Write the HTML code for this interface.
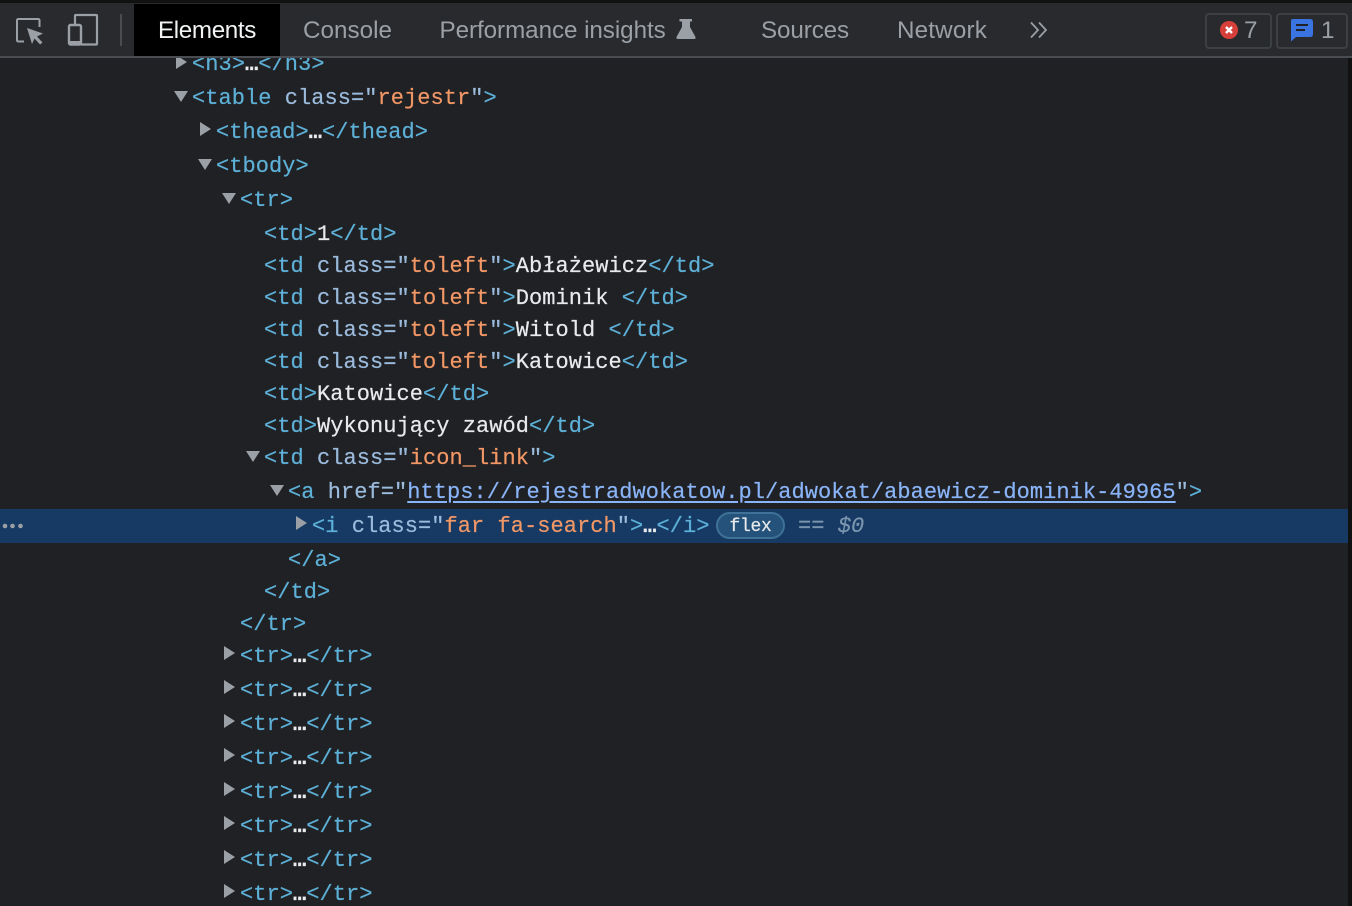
<!DOCTYPE html>
<html><head><meta charset="utf-8">
<style>
html,body{margin:0;padding:0;width:1352px;height:906px;overflow:hidden;background:#202124}
*{box-sizing:border-box}
#bar{position:absolute;left:0;top:3px;width:1352px;height:54px;background:#292a2d}
#top{position:absolute;left:0;top:0;width:1352px;height:3px;background:#111}
#line{position:absolute;left:0;top:56px;width:1352px;height:2px;background:#494c50}
#sel{position:absolute;left:134px;top:4px;width:146px;height:52px;background:#000}
.tab{position:absolute;top:31px;transform:translateY(-50%);font:24.2px/30px "Liberation Sans",sans-serif;color:#9aa0a6;white-space:nowrap}
.badge{position:absolute;top:13px;height:36px;border:2px solid #3c4043;border-radius:4px}
.l{position:absolute;font:22px/30px "Liberation Mono",monospace;letter-spacing:.046px;white-space:pre;color:#e8eaed;height:30px;-webkit-text-stroke:.2px}
.t{color:#5db0d7}.n{color:#9bbbdc}.v{color:#f29766}.w{color:#e8eaed}.e{color:#e8eaed;font-weight:bold}
.u{color:#8ab4f8;text-decoration:underline;text-underline-offset:3px}
.r,.d{position:absolute;width:0;height:0}
.r{border-left:11px solid #9aa0a6;border-top:7.5px solid transparent;border-bottom:7.5px solid transparent}
.d{border-top:11px solid #9aa0a6;border-left:7.5px solid transparent;border-right:7.5px solid transparent}
#hl{position:absolute;left:0;top:509px;width:1348px;height:34px;background:#163a63}
#sb{position:absolute;left:1348px;top:58px;width:4px;height:848px;background:#111}
#pill{position:absolute;left:716px;top:512px;width:69px;height:27px;border:2px solid #3f7296;border-radius:14px;background:#25527a;color:#e8eaed;font:18px/27px "Liberation Mono",monospace;letter-spacing:-.3px;text-align:center;-webkit-text-stroke:.2px}
</style></head><body>
<div id="top"></div><div id="bar"></div><div id="line"></div><div id="sel"></div>
<svg style="position:absolute;left:0;top:0" width="130" height="58" fill="none">
<path d="M24 41.500H18.500Q17 41.500 17 40V20.500Q17 19 18.500 19H38Q39.500 19 39.500 20.500V27" stroke="#9aa0a6" stroke-width="2"/>
<path d="M27 28L43 33.500L37 36.500L42.500 42.500L40 44.500L34.500 38.500L32 44Z" fill="#9aa0a6"/>
<path d="M75 24V16Q75 15 76 15H96Q97 15 97 16V43.500Q97 44.500 96 44.500H81" stroke="#9aa0a6" stroke-width="2.200"/>
<rect x="69" y="25" width="12" height="19.500" rx="1.500" stroke="#9aa0a6" stroke-width="2.400"/>
<rect x="69" y="41" width="12" height="4" fill="#9aa0a6"/>
<rect x="120" y="14" width="2" height="32" fill="#4a4c50"/>
</svg>
<div class="tab" style="left:158px;color:#f1f3f4;letter-spacing:-.35px">Elements</div>
<div class="tab" style="left:303px;letter-spacing:.03px">Console</div>
<div class="tab" style="left:439.500px;letter-spacing:-.05px">Performance insights</div>
<svg style="position:absolute;left:676px;top:18px" width="20" height="22"><path d="M3.500 1H16V3.500H14V9L19.500 19Q20 21 18 21H2Q0 21 .5 19L6 9V3.500H3.500Z" fill="#9aa0a6"/></svg>
<div class="tab" style="left:761px;letter-spacing:-.1px">Sources</div>
<div class="tab" style="left:897px;letter-spacing:.18px">Network</div>
<svg style="position:absolute;left:1030px;top:21px" width="18" height="18" fill="none" stroke="#9aa0a6" stroke-width="1.800"><path d="M1 1.500L8 9L1 16.500M9 1.500L16 9L9 16.500"/></svg>
<div class="badge" style="left:1205px;width:67px"></div>
<div class="badge" style="left:1276px;width:72px"></div>
<svg style="position:absolute;left:1220px;top:21px" width="19" height="19"><circle cx="9" cy="9" r="9" fill="#d7403a"/><path d="M6 6L12 12M12 6L6 12" stroke="#fff" stroke-width="2.400"/></svg>
<div class="tab" style="left:1244px">7</div>
<svg style="position:absolute;left:1290px;top:18px" width="24" height="24"><path d="M3 1H20Q23 1 23 4V16Q23 19 20 19H6L1 23.500V3Q1 1 3 1Z" fill="#3a74e0"/><path d="M6 7H18M6 12H15" stroke="#202124" stroke-width="2"/></svg>
<div class="tab" style="left:1321px">1</div>

<div id="hl"></div><div id="sb"></div>
<div style="position:absolute;left:0;top:58px;width:1348px;height:848px;overflow:hidden">
<div style="position:absolute;left:0;top:-58px;width:1348px;height:906px">
<div class="r" style="left:176px;top:55px;border-left-width:11px;border-top-width:7px;border-bottom-width:7px"></div>
<div class="l t" style="left:192px;top:50px">&lt;h3&gt;<span class="e">…</span>&lt;/h3&gt;</div>
<div class="d" style="left:174px;top:91px"></div>
<div class="l t" style="left:192px;top:84px">&lt;table <span class="n">class=</span><span class="n">"</span><span class="v">rejestr</span><span class="n">"</span>&gt;</div>
<div class="r" style="left:200px;top:122px"></div>
<div class="l t" style="left:216px;top:118px">&lt;thead&gt;<span class="e">…</span>&lt;/thead&gt;</div>
<div class="d" style="left:198px;top:159px"></div>
<div class="l t" style="left:216px;top:152px">&lt;tbody&gt;</div>
<div class="d" style="left:222px;top:193px"></div>
<div class="l t" style="left:240px;top:186px">&lt;tr&gt;</div>
<div class="l t" style="left:264px;top:220px">&lt;td&gt;<span class="w">1</span>&lt;/td&gt;</div>
<div class="l t" style="left:264px;top:252px">&lt;td <span class="n">class=</span><span class="n">"</span><span class="v">toleft</span><span class="n">"</span>&gt;<span class="w">Abłażewicz</span>&lt;/td&gt;</div>
<div class="l t" style="left:264px;top:284px">&lt;td <span class="n">class=</span><span class="n">"</span><span class="v">toleft</span><span class="n">"</span>&gt;<span class="w">Dominik </span>&lt;/td&gt;</div>
<div class="l t" style="left:264px;top:316px">&lt;td <span class="n">class=</span><span class="n">"</span><span class="v">toleft</span><span class="n">"</span>&gt;<span class="w">Witold </span>&lt;/td&gt;</div>
<div class="l t" style="left:264px;top:348px">&lt;td <span class="n">class=</span><span class="n">"</span><span class="v">toleft</span><span class="n">"</span>&gt;<span class="w">Katowice</span>&lt;/td&gt;</div>
<div class="l t" style="left:264px;top:380px">&lt;td&gt;<span class="w">Katowice</span>&lt;/td&gt;</div>
<div class="l t" style="left:264px;top:412px">&lt;td&gt;<span class="w">Wykonujący zawód</span>&lt;/td&gt;</div>
<div class="d" style="left:246px;top:451px"></div>
<div class="l t" style="left:264px;top:444px">&lt;td <span class="n">class=</span><span class="n">"</span><span class="v">icon_link</span><span class="n">"</span>&gt;</div>
<div class="d" style="left:270px;top:485px"></div>
<div class="l t" style="left:288px;top:478px">&lt;a <span class="n">href=</span><span class="n">"</span><span class="u">https://rejestradwokatow.pl/adwokat/abaewicz-dominik-49965</span><span class="n">"</span>&gt;</div>
<div class="r" style="left:296px;top:516px"></div>
<div class="l t" style="left:312px;top:512px">&lt;i <span class="n">class=</span><span class="n">"</span><span class="v">far fa-search</span><span class="n">"</span>&gt;<span class="e">…</span>&lt;/i&gt;</div>
<div id="pill">flex</div>
<div class="l" style="left:798px;top:512px;color:#7b95ae">== <i>$0</i></div>
<svg style="position:absolute;left:2px;top:523px" width="22" height="6"><circle cx="3" cy="3" r="2.300" fill="#9aa0a6"/><circle cx="10.500" cy="3" r="2.300" fill="#9aa0a6"/><circle cx="18.500" cy="3" r="2.300" fill="#9aa0a6"/></svg>
<div class="l t" style="left:288px;top:546px">&lt;/a&gt;</div>
<div class="l t" style="left:264px;top:578px">&lt;/td&gt;</div>
<div class="l t" style="left:240px;top:610px">&lt;/tr&gt;</div>
<div class="r" style="left:224px;top:646px"></div><div class="l t" style="left:240px;top:642px">&lt;tr&gt;<span class="e">…</span>&lt;/tr&gt;</div>
<div class="r" style="left:224px;top:680px"></div><div class="l t" style="left:240px;top:676px">&lt;tr&gt;<span class="e">…</span>&lt;/tr&gt;</div>
<div class="r" style="left:224px;top:714px"></div><div class="l t" style="left:240px;top:710px">&lt;tr&gt;<span class="e">…</span>&lt;/tr&gt;</div>
<div class="r" style="left:224px;top:748px"></div><div class="l t" style="left:240px;top:744px">&lt;tr&gt;<span class="e">…</span>&lt;/tr&gt;</div>
<div class="r" style="left:224px;top:782px"></div><div class="l t" style="left:240px;top:778px">&lt;tr&gt;<span class="e">…</span>&lt;/tr&gt;</div>
<div class="r" style="left:224px;top:816px"></div><div class="l t" style="left:240px;top:812px">&lt;tr&gt;<span class="e">…</span>&lt;/tr&gt;</div>
<div class="r" style="left:224px;top:850px"></div><div class="l t" style="left:240px;top:846px">&lt;tr&gt;<span class="e">…</span>&lt;/tr&gt;</div>
<div class="r" style="left:224px;top:884px"></div><div class="l t" style="left:240px;top:880px">&lt;tr&gt;<span class="e">…</span>&lt;/tr&gt;</div>
</div></div>
</body></html>
